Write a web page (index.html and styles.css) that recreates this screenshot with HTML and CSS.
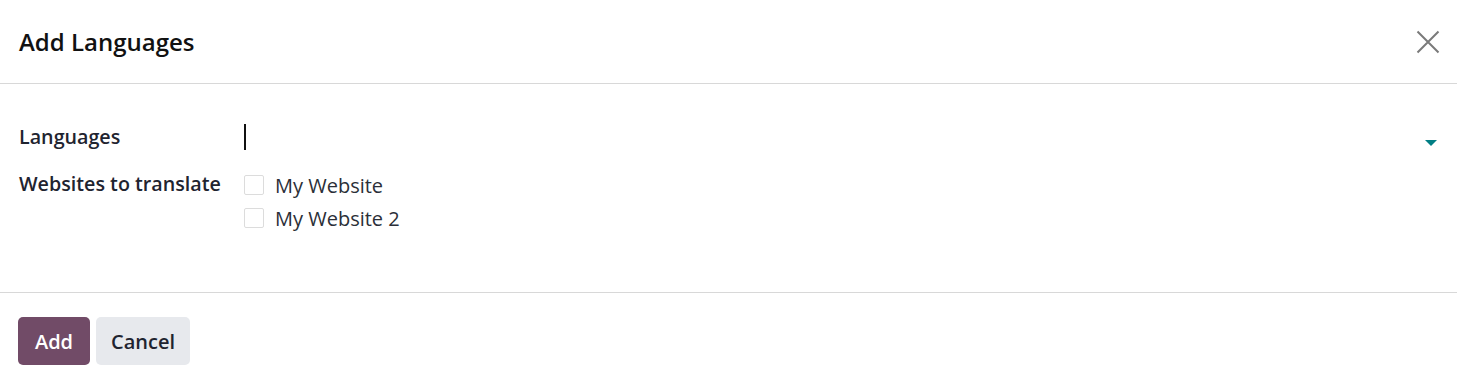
FILE: index.html
```html
<!DOCTYPE html>
<html>
<head>
<meta charset="utf-8">
<link rel="stylesheet" href="styles.css">
</head>
<body>
<div class="dialog">
  <header class="header">
    <h4 class="title">Add Languages</h4>
    <button class="close" aria-label="Close">
      <svg width="24" height="24" viewBox="0 0 24 24"><path d="M1.5 1.5 L22.5 22.5 M22.5 1.5 L1.5 22.5" stroke="#7a7a7a" stroke-width="2" fill="none"/></svg>
    </button>
  </header>
  <main class="body">
    <div class="row row-lang">
      <div class="label">Languages</div>
      <div class="field field-input">
        <span class="caret"></span>
        <span class="arrow"></span>
      </div>
    </div>
    <div class="row">
      <div class="label">Websites to translate</div>
      <div class="field checks">
        <label class="check"><span class="box"></span>My Website</label>
        <label class="check"><span class="box"></span>My Website 2</label>
      </div>
    </div>
  </main>
  <footer class="footer">
    <button class="btn btn-primary">Add</button>
    <button class="btn btn-secondary">Cancel</button>
  </footer>
</div>
</body>
</html>
```
FILE: styles.css
```css
* { box-sizing: border-box; }
html, body { margin: 0; padding: 0; background: #fff; }
body {
  font-family: "Open Sans", "Noto Sans", sans-serif;
  color: #1f2430;
  width: 1457px;
  height: 384px;
  overflow: hidden;
}
.dialog { display: flex; flex-direction: column; }
.header {
  height: 84px;
  display: flex;
  align-items: center;
  justify-content: space-between;
  padding: 0 17px 0 19px;
  border-bottom: 1px solid #d8d8d8;
}
.title {
  margin: 0;
  font-size: 24px;
  font-weight: 600;
  color: #111;
}
.close {
  border: 0; background: none; padding: 0; width: 24px; height: 24px;
  display: flex;
}
.body {
  height: 209px;
  padding: 31px 19px 0 19px;
  border-bottom: 1px solid #d8d8d8;
}
.row { display: flex; }
.label {
  width: 225px;
  font-size: 19.7px;
  font-weight: 600;
  color: #1f2430;
  white-space: nowrap;
}
.row-lang { height: 42px; align-items: center; margin-bottom: 13px; }
.field-input {
  flex: 1;
  position: relative;
  height: 42px;
  display: flex;
  align-items: center;
}
.caret {
  display: block;
  width: 2px;
  height: 26px;
  background: #111;
  margin-top: 2px;
}
.arrow {
  position: absolute;
  right: 1px;
  top: 25px;
  width: 0; height: 0;
  border-left: 6px solid transparent;
  border-right: 6px solid transparent;
  border-top: 6px solid #017e84;
}
.checks { display: flex; flex-direction: column; gap: 3px; }
.check {
  display: flex;
  align-items: center;
  font-size: 20px;
  color: #2b2f38;
  height: 30px;
}
.box {
  width: 20px; height: 20px;
  border: 1px solid #dcdcdc;
  border-radius: 2px;
  margin-right: 11px;
  background: #fff;
}
.footer {
  display: flex;
  gap: 6px;
  padding: 24px 18px 0 18px;
}
.btn {
  height: 48px;
  border: 0;
  border-radius: 5px;
  font-family: "Open Sans", "Noto Sans", sans-serif;
  font-size: 20px;
  font-weight: 600;
  padding: 0;
}
.btn-primary { background: #714b67; color: #fff; width: 72px; }
.btn-secondary { background: #e7e9ed; color: #1f2430; width: 94px; }
```
